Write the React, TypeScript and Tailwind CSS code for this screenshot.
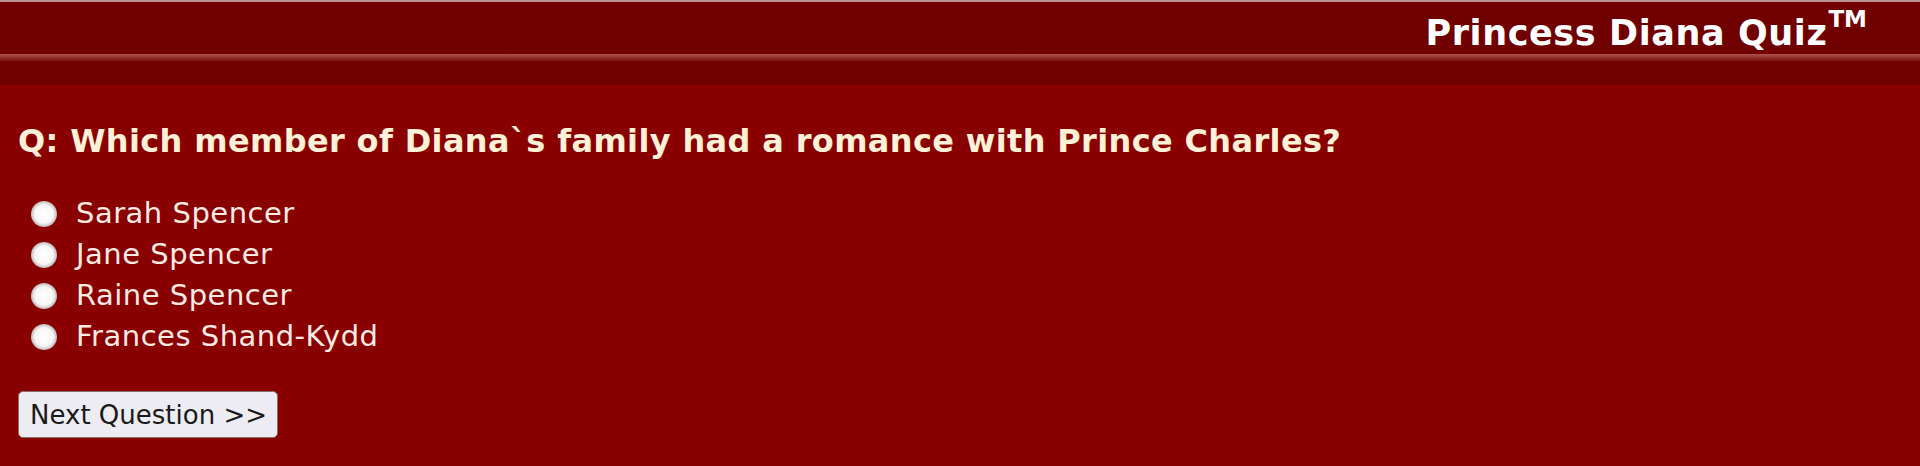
import React from "react";

const answers = ["Sarah Spencer", "Jane Spencer", "Raine Spencer", "Frances Shand-Kydd"];

const face = "font-['DejaVu_Sans',Tahoma,Verdana,sans-serif]";

export default function App() {
  return (
    <div className={`min-h-[466px] w-full bg-[#880000] ${face}`}>
      {/* Title bar */}
      <header className="border-t-2 border-[#b89494]">
        <div className="flex h-[52px] items-start justify-end bg-[#700000] pr-[53px] pt-[14px]">
          <h1 className="text-[35px] font-bold leading-none tracking-[0.6px] text-white">
            Princess Diana Quiz
            <sup className="ml-[1px] text-[23px] tracking-normal align-[7px]">TM</sup>
          </h1>
        </div>
        <div className="h-[8px] bg-gradient-to-b from-[#b05050] to-[#700000]" />
        <div className="h-[23px] bg-[#700000]" />
      </header>

      {/* Question */}
      <main className="px-[18px] pt-[40px]">
        <h2 className="text-[32px] font-bold leading-none tracking-[0.35px] text-[#fff0d8]">
          Q: Which member of Diana`s family had a romance with Prince Charles?
        </h2>

        <ul className="mt-[36px] flex flex-col">
          {answers.map((a) => (
            <li key={a} className="flex h-[41px] items-center">
              <label className="flex items-center">
                <input
                  type="radio"
                  name="answer"
                  className="ml-[13px] mr-[19px] h-[26px] w-[26px] appearance-none rounded-full bg-[radial-gradient(circle,#ffffff_0%,#f6f6f6_50%,#c8c0c0_68%,#3a2424_100%)]"
                />
                <span className="text-[29px] leading-none tracking-[0.5px] text-[#ffeae4]">{a}</span>
              </label>
            </li>
          ))}
        </ul>

        <button className="mt-[34px] h-[47px] w-[260px] rounded-[5px] border border-[#8a7070] bg-[#ececf2] pl-[11px] text-left text-[26px] leading-none text-[#1a1a1a]">
          Next Question &gt;&gt;
        </button>
      </main>
    </div>
  );
}
